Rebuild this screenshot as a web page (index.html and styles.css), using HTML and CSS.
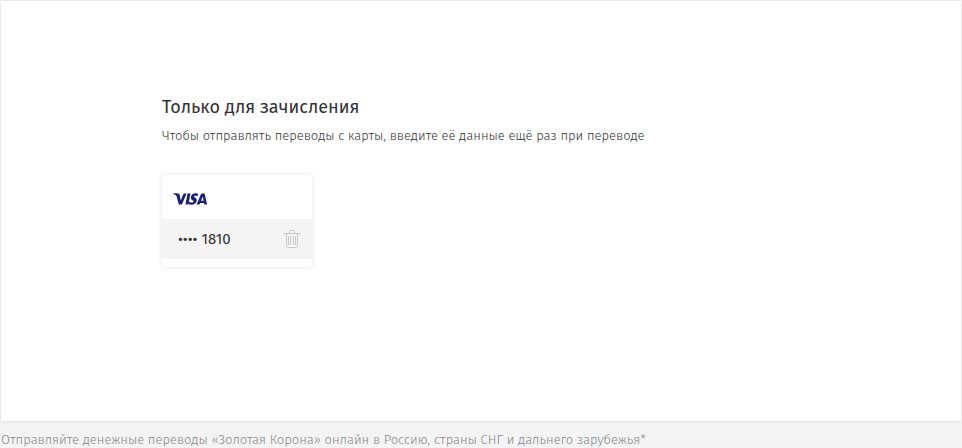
FILE: index.html
```html
<!DOCTYPE html>
<html lang="ru">
<head>
<meta charset="utf-8">
<meta name="viewport" content="width=device-width, initial-scale=1">
<title>Карты</title>
<link rel="stylesheet" href="styles.css">
</head>
<body>
<main class="panel">
  <section class="cards">
    <h1 class="cards-title">Только для зачисления</h1>
    <p class="cards-hint">Чтобы отправлять переводы с карты, введите её данные ещё раз при переводе</p>
    <article class="card">
      <div class="card-brand">
        <svg class="visa" viewBox="0 0 34 12" role="img" aria-label="Visa">
          <path fill="#1b1f71" d="M0 .6C1.5.3 3.5.3 5 .5c1 .1 1.500.5 1.700 1.400l1 5.500L10.600.5h3L8.900 11.600H5.800L3.500 3C3.200 2 1.500 1.100 0 .9zM14.600.5h2.900l-2.200 11.100h-2.900zM25.100.8l-.5 2.400c-1.300-.6-3.500-.7-3.700.3-.1 1 3.200 1.300 2.900 4.100-.2 2.700-2.500 4.200-5.300 4.200-1.200 0-2.300-.2-3-.5l.5-2.500c1.300.8 4.400 1 4.600-.4.200-1.200-2.900-1.300-2.700-4C18.100 1.800 20.200.3 22.600.3c1 0 1.900.2 2.500.5zM29.100.5h2.500L34 11.600h-2.700L31 9.900h-3.800l-.7 1.700h-2.900l4.200-10.200c.2-.6.700-.9 1.300-.9zm.6 3L28.100 7.700h2.500z"/>
        </svg>
      </div>
      <div class="card-row">
        <span class="card-number">•••• 1810</span>
        <button class="card-delete" type="button" aria-label="Удалить карту">
          <svg class="trash" viewBox="0 0 16 18" fill="none" stroke="#c8c8c8">
            <path d="M0 3.500H16M5.500 3V1.500Q5.500.5 6.500.5H9.500Q10.500.5 10.500 1.500V3M2.500 4V16.500Q2.500 17.500 3.500 17.500H12.500Q13.500 17.500 13.500 16.500V4M4.500 6V15M6.500 6V15M9.500 6V15M11.500 6V15"/>
          </svg>
        </button>
      </div>
    </article>
  </section>
</main>
<footer class="footer">Отправляйте денежные переводы «Золотая Корона» онлайн в Россию, страны СНГ и дальнего зарубежья*</footer>
</body>
</html>
```
FILE: styles.css
```css
* {
  box-sizing: border-box;
}

body {
  margin: 0;
  padding: 1px;
  background: #f4f4f4;
  color: #333;
  font: 300 13px/20px "Fira Sans", "Noto Sans", sans-serif;
}

.panel {
  min-height: 420px;
  padding: 94px 16px;
  background: #fff;
  box-shadow: 0 0 4px rgba(0, 0, 0, 0.12);
}

.cards {
  max-width: 638px;
  margin: 0 auto;
}

.cards-title {
  margin: 0 0 7px;
  font-size: 18px;
  font-weight: 400;
  line-height: 24px;
}

.cards-hint {
  margin: 0 0 29px;
}

.card {
  width: 150px;
  padding-bottom: 8px;
  border-radius: 4px;
  background: #fff;
  box-shadow: 0 0 6px rgba(0, 0, 0, 0.1);
}

.card-brand {
  display: flex;
  align-items: center;
  height: 44px;
  padding: 4px 11px 0;
}

.visa {
  width: 34px;
  height: 12px;
}

.card-row {
  display: flex;
  align-items: center;
  justify-content: space-between;
  height: 40px;
  padding: 0 12px 0 16px;
  background: #f4f4f4;
}

.card-number {
  font-size: 15px;
  font-weight: 400;
}

.card-delete {
  display: flex;
  padding: 0;
  border: 0;
  background: none;
  cursor: pointer;
}

.trash {
  width: 16px;
  height: 18px;
}

.footer {
  padding: 10px 0 0;
  color: #888;
  line-height: 18px;
}
```
